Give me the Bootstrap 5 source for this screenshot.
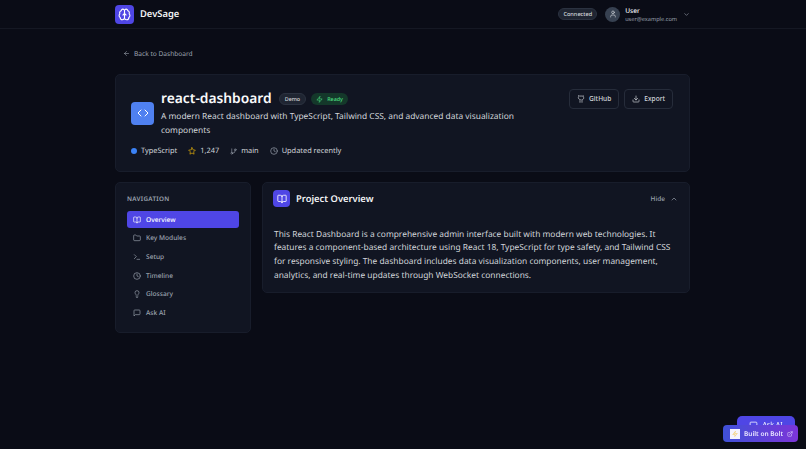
<!DOCTYPE html>
<html lang="en">
<head>
    <meta charset="UTF-8">
    <meta name="viewport" content="width=device-width, initial-scale=1.0">
    <title>DevSage</title>
    <link rel="stylesheet" href="https://cdn.jsdelivr.net/npm/bootstrap@5.3.0/dist/css/bootstrap.min.css">
    <style>
        html, body { height: 100%; }
        body { background: #0a0c16; font-family: "Noto Sans", sans-serif; color: #d1d5db; overflow: hidden; font-size: 10px; line-height: 10px; text-rendering: geometricPrecision; }
        svg { display: block; flex-shrink: 0; fill: none; stroke: currentColor; stroke-width: 2; stroke-linecap: round; stroke-linejoin: round; }
        .top-bar { height: 29px; border-bottom: 1px solid #151823; }
        .wrap { width: 575px; margin-left: 115px; }
        .logo-box { width: 19px; height: 19px; border-radius: 4px; background: #4f46e5; color: #fff; }
        .brand { font-size: 9.4px; font-weight: 600; color: #f3f4f6; margin-left: 6px; }
        .conn { font-size: 5.6px; font-weight: 500; color: #d1d5db; background: #1f2532; border: 1px solid #2b3240; border-radius: 8px; height: 12px; padding: 0 4px; }
        .avatar { width: 15px; height: 15px; border-radius: 50%; background: #374151; color: #d1d5db; margin: 0 5px 0 8px; }
        .u-name { font-size: 6.6px; font-weight: 500; color: #f3f4f6; line-height: 9px; }
        .u-mail { font-size: 5.6px; color: #9ca3af; line-height: 8px; }
        .chev { color: #9ca3af; margin-left: 6px; }
        .back-row { height: 45px; font-size: 6.6px; color: #9ca3af; padding-left: 8px; padding-top: 4px; white-space: nowrap; }
        .panel { background: #111522; border: 1px solid #181d2b; border-radius: 5px; }
        .hero { height: 98px; padding: 14px 15px 0; margin-bottom: 10px; }
        .hero-top { gap: 7px; }
        .code-box { width: 23px; height: 23px; border-radius: 4px; background: #4f80f0; color: #fff; margin-top: -1px; }
        .title-row { gap: 5px; }
        .repo-name { font-size: 13.8px; font-weight: 600; color: #f9fafb; line-height: 20px; margin: 0 2px 0 0; }
        .tag-demo { font-size: 5.4px; font-weight: 500; color: #d1d5db; background: #1f2532; border: 1px solid #2b3240; border-radius: 7px; height: 12px; padding: 0 5px; }
        .tag-ready { font-size: 5.4px; font-weight: 500; color: #4ade80; background: #14382a; border-radius: 7px; height: 12px; padding: 0 5px; }
        .repo-desc { font-size: 8.4px; line-height: 14px; color: #d1d5db; width: 375px; margin: 1px 0 0; }
        .meta { font-size: 7.4px; font-weight: 400; color: #d1d5db; margin-top: 8px; }
        .meta-icon { margin-left: 11px; margin-right: 4px; color: #9ca3af; }
        .star-icon { color: #eab308; }
        .lang-dot { width: 6px; height: 6px; border-radius: 50%; background: #3b82f6; }
        .act-btn { font-size: 6.6px; line-height: 10px; font-weight: 500; color: #d1d5db; background: transparent; border: 1px solid #262c3a; border-radius: 4px; height: 20px; padding: 0 7px; }
        .act-btn:hover { color: #fff; border-color: #374151; }
        .act-row { gap: 5px; margin-right: 1px; }
        .body-row { gap: 11px; }
        .side { width: 136px; flex-shrink: 0; height: 151px; padding: 11px; }
        .side-title { font-size: 6.3px; font-weight: 600; letter-spacing: .3px; color: #9ca3af; margin-bottom: 7px; }
        .side-links { gap: 1.7px; }
        .side-link { height: 17px; border-radius: 3px; padding: 0 6px; font-size: 6.6px; font-weight: 500; color: #9ca3af; text-decoration: none; white-space: nowrap; gap: 5px; }
        .side-link.on { background: #4f46e5; color: #fff; }
        .main-card { height: 111px; }
        .main-head { height: 31px; padding: 0 11px 0 10px; }
        .book-box { width: 17px; height: 17px; border-radius: 4px; background: #4f46e5; color: #fff; }
        .main-title { font-size: 9.4px; line-height: 12px; font-weight: 600; color: #f3f4f6; margin: 0 0 0 6px; }
        .hide-btn { font-size: 6.5px; font-weight: 500; color: #9ca3af; gap: 5px; }
        .main-text { font-size: 8.4px; line-height: 13.7px; color: #d1d5db; padding: 13.5px 11px 0; margin: 0; }
        .ask-fab { position: fixed; left: 737px; top: 416px; width: 58px; height: 24px; border-radius: 5px; background: #4f46e5; color: #fff; font-size: 7px; padding-top: 5px; }
        .bolt { position: fixed; left: 723px; top: 425px; width: 75px; height: 17px; border-radius: 4px; background: linear-gradient(90deg, #3f51d8, #7c35d8); color: #e9e6ff; font-size: 6.5px; font-weight: 600; padding-left: 7px; white-space: nowrap; }
        .bolt-icon { width: 10px; height: 10px; background: #f5f3ff; color: #f5c542; }
    </style>
</head>
<body>

    <div class="top-bar">
        <div class="wrap h-100 d-flex align-items-center justify-content-between">
            <div class="d-flex align-items-center">
                <div class="logo-box d-flex align-items-center justify-content-center">
                    <svg width="13" height="13" viewBox="0 0 24 24"><path d="M12 5a3 3 0 1 0-6 .1 4 4 0 0 0-2.500 5.800 4 4 0 0 0 .5 6.600A4 4 0 1 0 12 18z"/><path d="M12 5a3 3 0 1 1 6 .1 4 4 0 0 1 2.500 5.800 4 4 0 0 1-.5 6.600A4 4 0 1 1 12 18z"/><path d="M15 13a4.500 4.500 0 0 1-3-4 4.500 4.500 0 0 1-3 4"/></svg>
                </div>
                <span class="brand">DevSage</span>
            </div>
            <div class="d-flex align-items-center">
                <span class="conn d-flex align-items-center">Connected</span>
                <span class="avatar d-flex align-items-center justify-content-center"><svg width="8" height="8" viewBox="0 0 24 24"><path d="M19 21v-2a4 4 0 0 0-4-4H9a4 4 0 0 0-4 4v2"/><circle cx="12" cy="7" r="4"/></svg></span>
                <div>
                    <div class="u-name">User</div>
                    <div class="u-mail">user@example.com</div>
                </div>
                <svg class="chev" width="7" height="7" viewBox="0 0 24 24"><path d="m6 9 6 6 6-6"/></svg>
            </div>
        </div>
    </div>

    <div class="wrap">
        <div class="back-row d-flex align-items-center">
            <svg class="me-1" width="7" height="7" viewBox="0 0 24 24"><path d="m12 19-7-7 7-7M19 12H5"/></svg>
            <span>Back to Dashboard</span>
        </div>

        <div class="panel hero d-flex justify-content-between">
            <div>
                <div class="hero-top d-flex align-items-center">
                    <div class="code-box d-flex align-items-center justify-content-center">
                        <svg width="12" height="12" viewBox="0 0 24 24"><path d="m16 18 6-6-6-6M8 6l-6 6 6 6"/></svg>
                    </div>
                    <div>
                        <div class="title-row d-flex align-items-center">
                            <h1 class="repo-name">react-dashboard</h1>
                            <span class="tag-demo d-flex align-items-center">Demo</span>
                            <span class="tag-ready d-flex align-items-center gap-1">
                                <svg width="7" height="7" viewBox="0 0 24 24"><path d="M13 2 3 14h9l-1 8 10-12h-9z"/></svg>Ready
                            </span>
                        </div>
                        <p class="repo-desc">A modern React dashboard with TypeScript, Tailwind CSS, and advanced data visualization components</p>
                    </div>
                </div>
                <div class="meta d-flex align-items-center">
                    <span class="lang-dot me-1"></span><span>TypeScript</span>
                    <svg class="meta-icon star-icon" width="8" height="8" viewBox="0 0 24 24"><path d="m12 2 3 6.500 7 1-5 5 1.200 7L12 18l-6.200 3.500L7 14.500l-5-5 7-1z"/></svg><span>1,247</span>
                    <svg class="meta-icon" width="7" height="7" viewBox="0 0 24 24"><path d="M6 3v12"/><circle cx="18" cy="6" r="3"/><circle cx="6" cy="18" r="3"/><path d="M18 9a9 9 0 0 1-9 9"/></svg><span>main</span>
                    <svg class="meta-icon" width="8" height="8" viewBox="0 0 24 24"><circle cx="12" cy="12" r="10"/><path d="M12 6v6l4 2"/></svg><span>Updated recently</span>
                </div>
            </div>
            <div class="act-row d-flex">
                <button class="act-btn d-flex align-items-center gap-1">
                    <svg width="8" height="8" viewBox="0 0 24 24"><path d="M15 22v-4a5 5 0 0 0-1-3.500c3 0 6-2 6-5.500a5 5 0 0 0-1-3.500c.3-1.200.3-2.400 0-3.500 0 0-1 0-3 1.500a15 15 0 0 0-8 0C6 1 5 1 5 1c-.3 1.100-.3 2.300 0 3.500A5 5 0 0 0 4 8c0 3.500 3 5.500 6 5.500-.4.500-.7 1-.8 1.700-.1.700-.2 1.300-.2 1.800v5"/></svg>
                    GitHub
                </button>
                <button class="act-btn d-flex align-items-center gap-1">
                    <svg width="8" height="8" viewBox="0 0 24 24"><path d="M21 15v4a2 2 0 0 1-2 2H5a2 2 0 0 1-2-2v-4M7 10l5 5 5-5M12 15V3"/></svg>
                    Export
                </button>
            </div>
        </div>

        <div class="body-row d-flex align-items-start">
            <nav class="panel side">
                <div class="side-title">NAVIGATION</div>
                <div class="side-links d-flex flex-column">
                    <a class="side-link on d-flex align-items-center" href="#">
                        <svg width="8" height="8" viewBox="0 0 24 24"><path d="M12 7v14M3 18a1 1 0 0 1-1-1V4a1 1 0 0 1 1-1h5a4 4 0 0 1 4 4 4 4 0 0 1 4-4h5a1 1 0 0 1 1 1v13a1 1 0 0 1-1 1h-6a3 3 0 0 0-3 3 3 3 0 0 0-3-3z"/></svg>
                        Overview
                    </a>
                    <a class="side-link d-flex align-items-center" href="#">
                        <svg width="8" height="8" viewBox="0 0 24 24"><path d="M20 20a2 2 0 0 0 2-2V8a2 2 0 0 0-2-2h-7.900a2 2 0 0 1-1.700-.9l-.8-1.200A2 2 0 0 0 7.900 3H4a2 2 0 0 0-2 2v13a2 2 0 0 0 2 2z"/></svg>
                        Key Modules
                    </a>
                    <a class="side-link d-flex align-items-center" href="#">
                        <svg width="8" height="8" viewBox="0 0 24 24"><path d="m4 17 6-6-6-6M12 19h8"/></svg>
                        Setup
                    </a>
                    <a class="side-link d-flex align-items-center" href="#">
                        <svg width="8" height="8" viewBox="0 0 24 24"><circle cx="12" cy="12" r="10"/><path d="M12 6v6l4 2"/></svg>
                        Timeline
                    </a>
                    <a class="side-link d-flex align-items-center" href="#">
                        <svg width="8" height="8" viewBox="0 0 24 24"><path d="M15 14c.2-1 .7-1.700 1.500-2.500 1-.9 1.500-2.200 1.500-3.500A6 6 0 0 0 6 8c0 1 .2 2.200 1.500 3.500.7.700 1.300 1.500 1.500 2.500M9 18h6M10 22h4"/></svg>
                        Glossary
                    </a>
                    <a class="side-link d-flex align-items-center" href="#">
                        <svg width="8" height="8" viewBox="0 0 24 24"><path d="M21 15a2 2 0 0 1-2 2H7l-4 4V5a2 2 0 0 1 2-2h14a2 2 0 0 1 2 2z"/></svg>
                        Ask AI
                    </a>
                </div>
            </nav>

            <div class="panel main-card flex-grow-1">
                <div class="main-head d-flex align-items-center justify-content-between">
                    <div class="d-flex align-items-center">
                        <div class="book-box d-flex align-items-center justify-content-center">
                            <svg width="10" height="10" viewBox="0 0 24 24"><path d="M12 7v14M3 18a1 1 0 0 1-1-1V4a1 1 0 0 1 1-1h5a4 4 0 0 1 4 4 4 4 0 0 1 4-4h5a1 1 0 0 1 1 1v13a1 1 0 0 1-1 1h-6a3 3 0 0 0-3 3 3 3 0 0 0-3-3z"/></svg>
                        </div>
                        <h2 class="main-title">Project Overview</h2>
                    </div>
                    <div class="hide-btn d-flex align-items-center">
                        Hide
                        <svg width="8" height="8" viewBox="0 0 24 24"><path d="m18 15-6-6-6 6"/></svg>
                    </div>
                </div>
                <p class="main-text">This React Dashboard is a comprehensive admin interface built with modern web technologies. It features a component-based architecture using React 18, TypeScript for type safety, and Tailwind CSS for responsive styling. The dashboard includes data visualization components, user management, analytics, and real-time updates through WebSocket connections.</p>
            </div>
        </div>
    </div>

    <div class="ask-fab d-flex justify-content-center gap-1">
        <svg width="9" height="9" viewBox="0 0 24 24"><path d="M21 15a2 2 0 0 1-2 2H7l-4 4V5a2 2 0 0 1 2-2h14a2 2 0 0 1 2 2z"/></svg>
        <span>Ask AI</span>
    </div>
    <div class="bolt d-flex align-items-center gap-1">
        <span class="bolt-icon d-flex align-items-center justify-content-center"><svg width="6" height="6" viewBox="0 0 24 24"><path d="M13 2 3 14h9l-1 8 10-12h-9z"/></svg></span>
        <span>Built on Bolt</span>
        <svg width="6" height="6" viewBox="0 0 24 24"><path d="M15 3h6v6M10 14 21 3M18 13v6a2 2 0 0 1-2 2H5a2 2 0 0 1-2-2V8a2 2 0 0 1 2-2h6"/></svg>
    </div>

    <script src="https://cdn.jsdelivr.net/npm/bootstrap@5.3.0/dist/js/bootstrap.bundle.min.js"></script>
</body>
</html>
